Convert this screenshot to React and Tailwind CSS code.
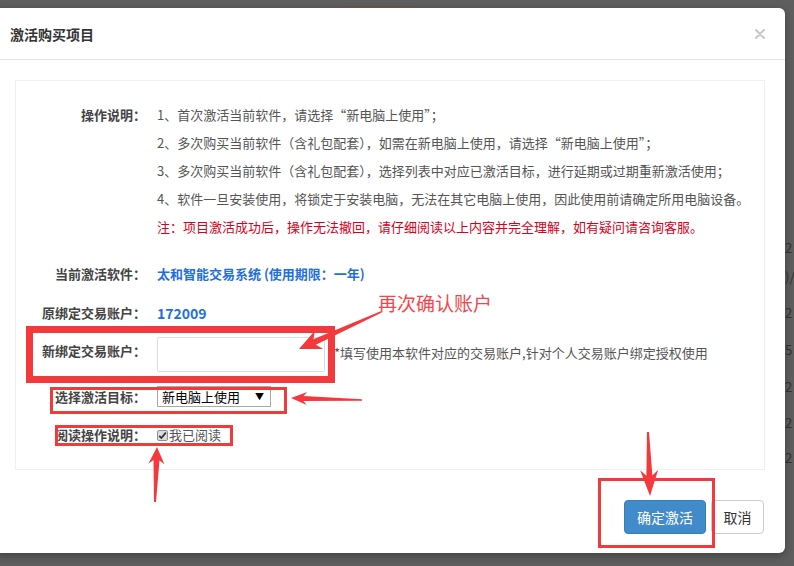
import React from "react";

const RED = "#f3393b";

function arrowPoints(x1, y1, x2, y2, headLen, headW, tailW, neckW) {
  const dx = x2 - x1;
  const dy = y2 - y1;
  const len = Math.hypot(dx, dy);
  const ux = dx / len;
  const uy = dy / len;
  const px = -uy;
  const py = ux;
  const nx = x2 - ux * headLen;
  const ny = y2 - uy * headLen;
  const back = headLen * 0.22;
  const pts = [
    [x1 + (px * tailW) / 2, y1 + (py * tailW) / 2],
    [nx + (px * neckW) / 2 + ux * back, ny + (py * neckW) / 2 + uy * back],
    [nx + (px * headW) / 2, ny + (py * headW) / 2],
    [x2, y2],
    [nx - (px * headW) / 2, ny - (py * headW) / 2],
    [nx - (px * neckW) / 2 + ux * back, ny - (py * neckW) / 2 + uy * back],
    [x1 - (px * tailW) / 2, y1 - (py * tailW) / 2],
  ];
  return pts.map((p) => p[0].toFixed(1) + "," + p[1].toFixed(1)).join(" ");
}

function Label({ children, className = "" }) {
  return (
    <div className={"w-[130px] shrink-0 text-right font-bold text-[#444] " + className}>
      {children}
    </div>
  );
}

export default function App() {
  const notes = [
    "1、首次激活当前软件，请选择“新电脑上使用”；",
    "2、多次购买当前软件（含礼包配套），如需在新电脑上使用，请选择“新电脑上使用”；",
    "3、多次购买当前软件（含礼包配套），选择列表中对应已激活目标，进行延期或过期重新激活使用；",
    "4、软件一旦安装使用，将锁定于安装电脑，无法在其它电脑上使用，因此使用前请确定所用电脑设备。",
  ];

  return (
    <div className="relative w-[794px] h-[566px] overflow-hidden bg-[#5e5e5e] font-['Noto_Sans_CJK_SC','Noto_Sans',sans-serif] text-[13px]">
      {/* top strip of overlay */}
      <div className="h-[8px] flex items-end">
        <div className="ml-[340px] mb-[1px] w-[75px] h-px bg-[#74503f]" />
      </div>

      <div className="flex">
        {/* modal */}
        <div className="ml-[-5px] w-[790px] h-[545px] shrink-0 bg-white rounded-r-[6px] shadow-[0_3px_9px_rgba(0,0,0,0.3)] flex flex-col">
          {/* header */}
          <div className="h-[52px] shrink-0 border-b border-[#e5e5e5] flex items-center justify-between pl-[15px] pr-[20px]">
            <div className="text-[14px] font-bold text-[#333] leading-none">激活购买项目</div>
            <svg width="10" height="10" viewBox="0 0 10 10" className="mt-[1px]">
              <path d="M1 1L9 9M9 1L1 9" stroke="#c4c4c4" strokeWidth="1.8" strokeLinecap="round" />
            </svg>
          </div>

          {/* body */}
          <div className="pt-[20px] pl-[20px] pr-[20px]">
            <div className="h-[390px] border border-[#f0f0f0] pt-[20px]">
              {/* 操作说明 */}
              <div className="flex items-start gap-[11px]">
                <Label className="leading-[28px]">操作说明：</Label>
                <div className="leading-[28px] text-[#555]">
                  {notes.map((n) => (
                    <div key={n} className="whitespace-nowrap">{n}</div>
                  ))}
                  <div className="whitespace-nowrap text-[#d9001b]">
                    注：项目激活成功后，操作无法撤回，请仔细阅读以上内容并完全理解，如有疑问请咨询客服。
                  </div>
                </div>
              </div>

              {/* 当前激活软件 */}
              <div className="mt-[16px] h-[34px] flex items-center gap-[11px]">
                <Label>当前激活软件：</Label>
                <div className="font-bold text-[#1f6fdd]">太和智能交易系统 (使用期限：一年)</div>
              </div>

              {/* 原绑定交易账户 */}
              <div className="mt-[5px] h-[34px] flex items-center gap-[11px]">
                <Label>原绑定交易账户：</Label>
                <div className="font-bold text-[#1f6fdd] text-[14px]">172009</div>
              </div>

              {/* 新绑定交易账户 */}
              <div className="mt-[7px] h-[35px] flex items-start gap-[11px]">
                <Label className="leading-[20px] pt-[4px]">新绑定交易账户：</Label>
                <div className="w-[168px] h-[35px] border border-[#ddd] rounded-[2px] bg-white shrink-0" />
                <div className="ml-[-2px] leading-[20px] pt-[6px] text-[#555] whitespace-nowrap">
                  *填写使用本软件对应的交易账户,针对个人交易账户绑定授权使用
                </div>
              </div>

              {/* 选择激活目标 */}
              <div className="mt-[14px] h-[21px] flex items-center gap-[11px]">
                <Label>选择激活目标：</Label>
                <div className="w-[114px] h-[21px] border border-[#a9a9a9] bg-white flex items-center justify-between pl-[4px] pr-[6px] text-black">
                  <span>新电脑上使用</span>
                  <span className="text-[9px] leading-none">▼</span>
                </div>
              </div>

              {/* 阅读操作说明 */}
              <div className="mt-[18px] h-[20px] flex items-center gap-[11px]">
                <Label>阅读操作说明：</Label>
                <div className="flex items-center text-[#555]">
                  <span className="w-[11px] h-[11px] border border-[#8f8f8f] bg-[#dcdcdc] rounded-[2px] flex items-center justify-center">
                    <svg width="9" height="9" viewBox="0 0 9 9">
                      <path d="M1.2 4.8L3.4 7L7.8 1.6" fill="none" stroke="#333" strokeWidth="1.8" />
                    </svg>
                  </span>
                  <span className="ml-[1px]">我已阅读</span>
                </div>
              </div>
            </div>
          </div>

          {/* footer */}
          <div className="mt-[30px] flex justify-end gap-[5px] pr-[21px]">
            <button className="w-[82px] h-[34px] rounded-[4px] bg-[#428bca] border border-[#357ebd] text-white text-[14px]">
              确定激活
            </button>
            <button className="w-[53px] h-[34px] rounded-[4px] bg-white border border-[#ccc] text-[#333] text-[14px]">
              取消
            </button>
          </div>
        </div>

        {/* background page glimpses at right edge */}
        <div className="w-[12px] overflow-hidden text-[13px] leading-[16px] text-[#2e2e2e] flex flex-col">
          <div className="mt-[232px]">2</div>
          <div className="mt-[13px]">)/</div>
          <div className="mt-[20px]">2</div>
          <div className="mt-[21px]">5</div>
          <div className="mt-[21px]">2</div>
          <div className="mt-[20px]">2</div>
          <div className="mt-[19px]">2</div>
        </div>
      </div>

      {/* red annotations overlay */}
      <svg className="absolute inset-0 pointer-events-none" width="794" height="566" viewBox="0 0 794 566">
        <rect x="29.5" y="329.5" width="302" height="50" fill="none" stroke={RED} strokeWidth="7" />
        <rect x="51.5" y="388.5" width="234" height="24" fill="none" stroke={RED} strokeWidth="3" />
        <rect x="56.5" y="426.5" width="175" height="18" fill="none" stroke={RED} strokeWidth="3" />
        <rect x="599.5" y="479.5" width="114" height="67" fill="none" stroke={RED} strokeWidth="3" />
        <polygon points={arrowPoints(381, 312, 299, 349, 22, 20, 1.5, 6)} fill={RED} />
        <polygon points={arrowPoints(362, 400, 291, 398, 16, 13, 1.5, 5)} fill={RED} />
        <polygon points={arrowPoints(155, 502, 157, 447, 17, 16, 2, 6)} fill={RED} />
        <polygon points={arrowPoints(648, 432, 650, 496, 26, 18, 2, 6)} fill={RED} />
      </svg>
      <div className="absolute left-[378px] top-[290px] text-[19px] leading-[26px] text-[#f6454a] whitespace-nowrap">
        再次确认账户
      </div>
    </div>
  );
}
